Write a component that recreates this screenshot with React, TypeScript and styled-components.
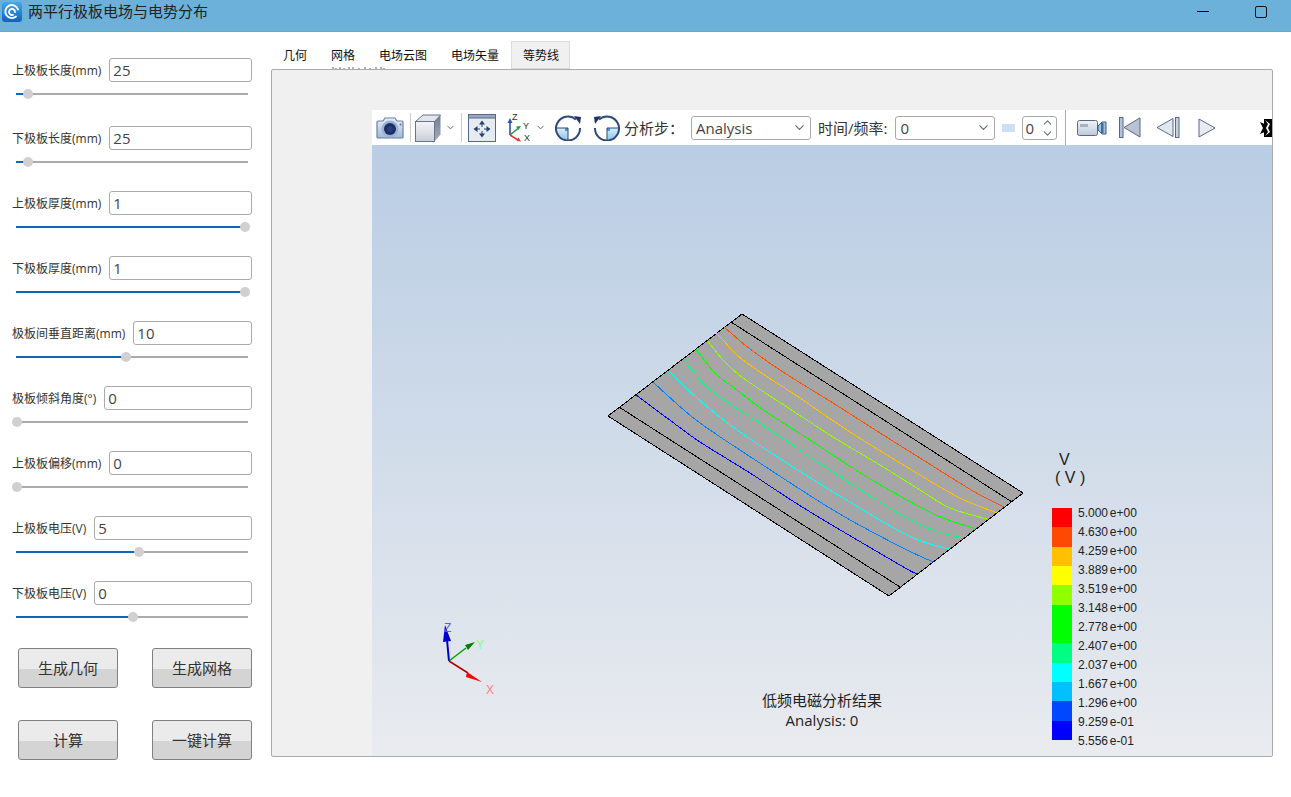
import { createGlobalStyle, styled } from "styled-components";
import { ChevronDown, ChevronUp } from "lucide-react";

const GlobalStyle = createGlobalStyle`
  html, body {
    margin: 0;
    padding: 0;
    background: #fff;
    font-family: "Open Sans", "Noto Sans CJK SC", sans-serif;
  }
`;

const fields = [
  { label: "上极板长度(mm)", value: "25", thumb: 12, after: 68 },
  { label: "下极板长度(mm)", value: "25", thumb: 12, after: 65 },
  { label: "上极板厚度(mm)", value: "1", thumb: 229, after: 65 },
  { label: "下极板厚度(mm)", value: "1", thumb: 229, after: 65 },
  { label: "极板间垂直距离(mm)", value: "10", thumb: 110, after: 65 },
  { label: "极板倾斜角度(°)", value: "0", thumb: 1, after: 65 },
  { label: "上极板偏移(mm)", value: "0", thumb: 1, after: 65 },
  { label: "上极板电压(V)", value: "5", thumb: 123, after: 65 },
  { label: "下极板电压(V)", value: "0", thumb: 117, after: 67 },
];

const tabs = ["几何", "网格", "电场云图", "电场矢量", "等势线"];

const legend = [
  { color: "#ff0000", label: "5.000 e+00" },
  { color: "#ff4800", label: "4.630 e+00" },
  { color: "#ffc000", label: "4.259 e+00" },
  { color: "#ffff00", label: "3.889 e+00" },
  { color: "#90ff00", label: "3.519 e+00" },
  { color: "#00ff00", label: "3.148 e+00" },
  { color: "#00ff00", label: "2.778 e+00" },
  { color: "#00ff80", label: "2.407 e+00" },
  { color: "#00ffff", label: "2.037 e+00" },
  { color: "#00c0ff", label: "1.667 e+00" },
  { color: "#0048ff", label: "1.296 e+00" },
  { color: "#0000ff", label: "9.259 e-01" },
];

// 等势线, page coordinates read off the screenshot
const contours: { color: string; pts: number[][] }[] = [
  { color: "#ff5000", pts: [[724, 327], [739, 340], [750, 349], [783, 372], [833, 403], [880, 433], [920, 458], [973, 491], [1004, 507]] },
  { color: "#ffc000", pts: [[716, 333], [723, 340], [737, 355], [760, 372], [800, 398], [850, 432], [920, 475], [960, 498], [997, 513]] },
  { color: "#90ff00", pts: [[708, 341], [723, 360], [743, 378], [787, 407], [833, 437], [880, 465], [920, 490], [950, 508], [987, 519]] },
  { color: "#00ff00", pts: [[696, 349], [715, 373], [737, 390], [762, 409], [810, 440], [867, 477], [920, 507], [943, 518], [976, 529]] },
  { color: "#00ff80", pts: [[683, 359], [703, 383], [720, 397], [767, 428], [827, 468], [893, 510], [933, 530], [963, 538]] },
  { color: "#00ffff", pts: [[669, 371], [697, 398], [733, 427], [793, 467], [863, 510], [913, 538], [949, 549]] },
  { color: "#0080ff", pts: [[653, 382], [677, 404], [700, 423], [743, 452], [833, 510], [897, 545], [933, 562]] },
  { color: "#0000ff", pts: [[636, 395], [667, 418], [700, 442], [750, 473], [807, 510], [900, 565], [917, 574]] },
];

// catmull-rom through the read-off points so the lines don't kink
function smoothPath(pts: number[][]) {
  let d = `M${pts[0][0]} ${pts[0][1]}`;
  for (let i = 0; i < pts.length - 1; i++) {
    const p0 = pts[Math.max(i - 1, 0)];
    const p1 = pts[i];
    const p2 = pts[i + 1];
    const p3 = pts[Math.min(i + 2, pts.length - 1)];
    const c1x = p1[0] + (p2[0] - p0[0]) / 6;
    const c1y = p1[1] + (p2[1] - p0[1]) / 6;
    const c2x = p2[0] - (p3[0] - p1[0]) / 6;
    const c2y = p2[1] - (p3[1] - p1[1]) / 6;
    d += `C${c1x} ${c1y} ${c2x} ${c2y} ${p2[0]} ${p2[1]}`;
  }
  return d;
}

function App() {
  return (
    <Page>
      <GlobalStyle />
      <TitleBar>
        <Logo viewBox="0 0 20 20">
          <defs>
            <linearGradient id="logoBg" x1="0" y1="0" x2="0" y2="1">
              <stop offset="0" stopColor="#45aaee" />
              <stop offset="1" stopColor="#0f62b8" />
            </linearGradient>
          </defs>
          <rect width="20" height="20" rx="3" fill="url(#logoBg)" />
          <path
            d="M16 7.500A6.500 6.500 0 1 0 14 14.500M13 10a3 3 0 1 0-2 2.800"
            fill="none"
            stroke="#fff"
            strokeWidth="1.800"
            strokeLinecap="round"
          />
        </Logo>
        <AppTitle>两平行极板电场与电势分布</AppTitle>
        <WindowButtons>
          <MinimizeGlyph />
          <MaximizeGlyph />
        </WindowButtons>
      </TitleBar>

      <Body>
        <Sidebar>
          {fields.map((field, i) => (
            <Field key={i} $after={field.after}>
              <FieldRow>
                <FieldLabel>{field.label}</FieldLabel>
                <ValueInput defaultValue={field.value} readOnly />
              </FieldRow>
              <SliderTrack>
                <SliderFill style={{ width: field.thumb }} />
                <SliderThumb style={{ left: field.thumb - 5 }} />
              </SliderTrack>
            </Field>
          ))}
          <ActionGrid>
            <ActionButton>生成几何</ActionButton>
            <ActionButton>生成网格</ActionButton>
            <ActionButton>计算</ActionButton>
            <ActionButton>一键计算</ActionButton>
          </ActionGrid>
        </Sidebar>

        <Main>
          <TabBar>
            {tabs.map((tab) => (
              <Tab key={tab} $active={tab === "等势线"}>
                {tab}
              </Tab>
            ))}
            <TabResidue width="54" height="2" viewBox="0 0 54 2">
              <path d="M1 2V0M4 2V1M8 2V0M12 2V1M17 2V0M21 2V0M27 2V1M33 2V0M38 2V1M44 2V0M49 2V0M52 2V1" stroke="#666" />
            </TabResidue>
          </TabBar>
          <Frame>
            <Viewer>
              <Toolbar>
                <ToolIcon $ml={4} width="28" height="24" viewBox="0 0 28 24">
                  <defs>
                    <linearGradient id="camBody" x1="0" y1="0" x2="0" y2="1">
                      <stop offset="0" stopColor="#e8f0f8" />
                      <stop offset="1" stopColor="#a3b9d6" />
                    </linearGradient>
                  </defs>
                  <path
                    d="M2 5h5l2-3h10l2 3h5a1 1 0 0 1 1 1v15a1 1 0 0 1-1 1H2a1 1 0 0 1-1-1V6a1 1 0 0 1 1-1z"
                    fill="url(#camBody)"
                    stroke="#6a7fa5"
                    strokeWidth="1.200"
                  />
                  <circle cx="14" cy="13" r="8.500" fill="#9bb2d0" />
                  <circle cx="14" cy="13" r="6" fill="#1b2f63" />
                  <circle cx="14" cy="13" r="3" fill="#24407f" />
                  <circle cx="24.500" cy="8.500" r="1" fill="#56698c" />
                </ToolIcon>
                <ToolSeparator $ml={6} />
                <ToolIcon $ml={4} width="26" height="28" viewBox="0 0 26 28">
                  <defs>
                    <linearGradient id="cubeFace" x1="0" y1="0" x2="0" y2="1">
                      <stop offset="0" stopColor="#f4f5f8" />
                      <stop offset="1" stopColor="#c9ced8" />
                    </linearGradient>
                    <linearGradient id="cubeSide" x1="0" y1="0" x2="0" y2="1">
                      <stop offset="0" stopColor="#6f7d95" />
                      <stop offset="1" stopColor="#a3acbb" />
                    </linearGradient>
                  </defs>
                  <path d="M0.500 7.500 8 1h17.500l-6 6.500z" fill="#e2e6ec" stroke="#68758c" />
                  <path d="M19.500 7.500l6-6.500v19.500l-6 7z" fill="url(#cubeSide)" />
                  <rect x="0.500" y="7.500" width="19" height="20" fill="url(#cubeFace)" stroke="#68758c" />
                </ToolIcon>
                <ToolChevron $ml={4} size={11} />
                <ToolSeparator $ml={5} />
                <ToolIcon $ml={6} width="28" height="28" viewBox="0 0 28 28">
                  <rect x="0.500" y="0.500" width="27" height="27" fill="#e6ebf2" stroke="#56698c" />
                  <rect x="0.500" y="0.500" width="27" height="3.500" fill="#9aa8c0" stroke="#56698c" />
                  <path d="M14 6.500l-3 4h6zM14 23.500l-3-4h6zM5.500 15l4-3v6zM22.500 15l-4-3v6z" fill="#25406f" />
                  <path d="M14 10v3M14 17v3M9 15h3M16 15h3" stroke="#25406f" />
                </ToolIcon>
                <ToolIcon $ml={11} width="24" height="30" viewBox="0 0 24 30">
                  <path d="M3 22V8" stroke="#2b55a8" strokeWidth="1.600" />
                  <path d="M3 5 0.500 10h5z" fill="#2b55a8" />
                  <path d="M3 22 11 15.500" stroke="#1f9a4b" strokeWidth="1.600" />
                  <path d="M14 13l-5 .5 2.500 3.500z" fill="#1f9a4b" />
                  <path d="M3 22l8 5" stroke="#e03a3a" strokeWidth="1.600" />
                  <path d="M14 28.500l-4.500-.5 2-3.500z" fill="#e03a3a" />
                  <IconLetter x="5" y="7">Z</IconLetter>
                  <IconLetter x="16" y="16">Y</IconLetter>
                  <IconLetter x="17" y="28">X</IconLetter>
                </ToolIcon>
                <ToolChevron $ml={4} size={11} />
                <RotateIcon $ml={9} id="rotA" />
                <RotateIcon $ml={11} id="rotB" $flip />
                <ToolLabel $ml={4}>分析步：</ToolLabel>
                <ComboBox $ml={7} $w={120}>
                  <span>Analysis</span>
                  <ChevronDown size={15} color="#68737f" />
                </ComboBox>
                <ToolLabel $ml={7}>时间/频率:</ToolLabel>
                <ComboBox $ml={8} $w={100}>
                  <span>0</span>
                  <ChevronDown size={15} color="#68737f" />
                </ComboBox>
                <ProgressChip />
                <SpinBox>
                  <span>0</span>
                  <SpinArrows>
                    <ChevronUp size={13} color="#68737f" />
                    <ChevronDown size={13} color="#68737f" />
                  </SpinArrows>
                </SpinBox>
                <ToolSeparator $ml={8} $strong />
                <ToolIcon $ml={11} width="30" height="18" viewBox="0 0 30 18">
                  <defs>
                    <linearGradient id="videoBody" x1="0" y1="0" x2="0" y2="1">
                      <stop offset="0" stopColor="#f1f4f8" />
                      <stop offset="1" stopColor="#bcc9db" />
                    </linearGradient>
                  </defs>
                  <rect x="0.500" y="1.500" width="20" height="15" rx="2" fill="url(#videoBody)" stroke="#56698c" />
                  <rect x="3" y="5" width="8" height="3" fill="#a9b1bd" />
                  <path d="M21 7l4-4h4v12h-4l-4-4z" fill="#9fc2e0" stroke="#3d5a88" />
                  <rect x="24" y="4" width="2.500" height="10" fill="#3d6fa3" />
                </ToolIcon>
                <ToolIcon $ml={12} width="22" height="21" viewBox="0 0 22 21">
                  <rect x="0.500" y="0.500" width="3.500" height="20" fill="#b5c2d4" stroke="#56698c" />
                  <path d="M21 0.800V20L5 10.500z" fill="#b8c3d2" stroke="#56698c" />
                </ToolIcon>
                <ToolIcon $ml={15} width="24" height="21" viewBox="0 0 24 21">
                  <path d="M17 1.500V19.500L1 10.500z" fill="#e3e8ef" stroke="#56698c" />
                  <rect x="19.500" y="0.500" width="3.500" height="20" fill="#c7d1df" stroke="#56698c" />
                </ToolIcon>
                <ToolIcon $ml={18} width="18" height="20" viewBox="0 0 18 20">
                  <path d="M1 1V19L17 10z" fill="#e7ebf1" stroke="#56698c" />
                </ToolIcon>
                <ToolIcon $ml={44} width="12" height="18" viewBox="0 0 12 18">
                  <rect x="4" width="8" height="18" fill="#000" />
                  <path d="M0 3 7 6 4 9 7 12 0 15 3 9z" fill="#000" />
                  <path d="M5 1 10 5 8 9 10 13 5 17 8 13 6 9 8 5z" fill="#fff" />
                </ToolIcon>
              </Toolbar>
              <Viewport>
                <SceneSvg viewBox="372 145 900 611">
                  <path d="M742 314 1023 493 889 596 608 416z" fill="#a6a6a6" stroke="#000" shapeRendering="crispEdges" />
                  <path d="M731 322 1012 502M619 407 900 587" fill="none" stroke="#000" shapeRendering="crispEdges" />
                  {contours.map((line) => (
                    <path key={line.color} d={smoothPath(line.pts)} fill="none" stroke={line.color} shapeRendering="crispEdges" />
                  ))}
                  <path d="M449 661 447 640" stroke="#0000d0" strokeWidth="2" />
                  <path d="M445 625 443 642 451 641z" fill="#0000d0" />
                  <path d="M449 661 466 648" stroke="#00a000" strokeWidth="1.500" />
                  <path d="M475 642 465 645 468 650z" fill="#008000" />
                  <path d="M449 661 468 673" stroke="#b00000" strokeWidth="1.500" />
                  <path d="M482 682 467 672 466 677z" fill="#ff0000" />
                  <AxisLetter x="444" y="632" fill="#5a5aff">Z</AxisLetter>
                  <AxisLetter x="476" y="649" fill="#80ff80">Y</AxisLetter>
                  <AxisLetter x="486" y="694" fill="#ff8080">X</AxisLetter>
                </SceneSvg>
                <Caption>
                  <div>低频电磁分析结果</div>
                  <div>Analysis: 0</div>
                </Caption>
                <Legend>
                  <LegendTitle>V</LegendTitle>
                  <LegendUnit>( V )</LegendUnit>
                  <LegendBody>
                    <ColorBar>
                      {legend.map((item, i) => (
                        <ColorCell key={i} $color={item.color} />
                      ))}
                    </ColorBar>
                    <LegendValues>
                      {legend.map((item) => (
                        <LegendValue key={item.label}>{item.label}</LegendValue>
                      ))}
                      <LegendValue>5.556 e-01</LegendValue>
                    </LegendValues>
                  </LegendBody>
                </Legend>
              </Viewport>
            </Viewer>
          </Frame>
        </Main>
      </Body>
    </Page>
  );
}
export default App;

function RotateIcon({ $ml, $flip, id }: { $ml: number; $flip?: boolean; id: string }) {
  return (
    <RotateSvg $ml={$ml} $flip={$flip} width="27" height="27" viewBox="0 0 27 27">
      <defs>
        <linearGradient id={id} x1="0" y1="0" x2="0" y2="1">
          <stop offset="0" stopColor="#d9eefb" />
          <stop offset="1" stopColor="#8cc4ea" />
        </linearGradient>
      </defs>
      <path d="M13 14H1A12 12 0 0 0 13 26z" fill={`url(#${id})`} />
      <path d="M10 14h3v3h-3z" fill="#4f9bd8" />
      <path d="M1 14h12v12" fill="none" stroke="#2f4a78" />
      <path d="M21 5.500A12 12 0 1 0 25 14" fill="none" stroke="#2f4a78" strokeWidth="2" />
      <path d="M19 2l7 1-1 7z" fill="#1d3566" />
    </RotateSvg>
  );
}

const Page = styled.div`
  width: 1291px;
  height: 797px;
  overflow: hidden;
  background: #fff;
`;

const TitleBar = styled.div`
  height: 31px;
  display: flex;
  align-items: flex-start;
  padding-left: 2px;
  background: #6bb1da;
  border-bottom: 1px solid #9a9a9a;
`;

const Logo = styled.svg`
  width: 20px;
  height: 20px;
  margin-top: 2px;
`;

const AppTitle = styled.div`
  margin-left: 6px;
  font-size: 15px;
  line-height: 22px;
  color: #222;
`;

const WindowButtons = styled.div`
  margin-left: auto;
  display: flex;
  align-items: flex-start;
`;

const MinimizeGlyph = styled.div`
  width: 12px;
  height: 1px;
  margin-top: 11px;
  background: #000;
`;

const MaximizeGlyph = styled.div`
  box-sizing: border-box;
  width: 12px;
  height: 12px;
  margin: 6px 24px 0 46px;
  border: 1.5px solid #111;
  border-radius: 2px;
`;

const Body = styled.div`
  display: flex;
`;

const Sidebar = styled.div`
  width: 271px;
  box-sizing: border-box;
  padding: 26px 19px 0 12px;
`;

const Field = styled.div<{ $after: number }>`
  height: ${(p) => p.$after}px;
`;

const FieldRow = styled.div`
  display: flex;
  align-items: center;
  gap: 8px;
  height: 24px;
`;

const FieldLabel = styled.label`
  font-size: 12px;
  color: #333;
  white-space: nowrap;
`;

const ValueInput = styled.input`
  flex: 1;
  min-width: 0;
  height: 24px;
  box-sizing: border-box;
  padding: 0 3px;
  border: 1px solid #aaa;
  border-radius: 3px;
  outline: none;
  font-family: inherit;
  font-size: 15px;
  color: #444;
`;

const SliderTrack = styled.div`
  position: relative;
  width: 232px;
  height: 2px;
  margin: 11px 0 0 4px;
  background: #ababab;
`;

const SliderFill = styled.div`
  height: 2px;
  background: #0f66b5;
`;

const SliderThumb = styled.div`
  position: absolute;
  top: -4px;
  width: 10px;
  height: 10px;
  border-radius: 50%;
  background: #d0d0d0;
`;

const ActionGrid = styled.div`
  display: grid;
  grid-template-columns: 100px 100px;
  grid-auto-rows: 40px;
  column-gap: 34px;
  row-gap: 32px;
  margin-left: 6px;
`;

const ActionButton = styled.button`
  padding: 0 0 2px;
  border: 1px solid #808080;
  border-radius: 3px;
  background: linear-gradient(#ebebeb 0, #ebebeb 52%, #d4d4d4 52%, #d4d4d4 100%);
  font-family: inherit;
  font-size: 15px;
  color: #333;
`;

const Main = styled.div`
  width: 1002px;
  padding-top: 9px;
`;

const TabBar = styled.div`
  position: relative;
  display: flex;
  height: 28px;
`;

const TabResidue = styled.svg`
  position: absolute;
  left: 61px;
  bottom: 0;
`;

const Tab = styled.div<{ $active?: boolean }>`
  box-sizing: border-box;
  height: 28px;
  padding: 6px ${(p) => (p.$active ? 11 : 12)}px 0 12px;
  font-size: 12px;
  line-height: 17px;
  color: #111;
  white-space: nowrap;
  background: ${(p) => (p.$active ? "#f0f0f0" : "transparent")};
  box-shadow: ${(p) => (p.$active ? "inset 0 0 0 1px #dcdcdc" : "none")};
`;

const Frame = styled.div`
  box-sizing: border-box;
  width: 1002px;
  height: 688px;
  padding: 40px 0 0 100px;
  border: 1px solid #aaa;
  border-radius: 2px;
  background: #f0f0f0;
  overflow: hidden;
`;

const Viewer = styled.div`
  display: flex;
  flex-direction: column;
  height: 100%;
`;

const Toolbar = styled.div`
  display: flex;
  align-items: center;
  height: 35px;
  background: #fff;
  overflow: hidden;
  flex: none;
`;

const ToolIcon = styled.svg<{ $ml: number }>`
  flex: none;
  margin-left: ${(p) => p.$ml}px;
`;

const RotateSvg = styled.svg<{ $ml: number; $flip?: boolean }>`
  flex: none;
  margin-left: ${(p) => p.$ml}px;
  transform: ${(p) => (p.$flip ? "scaleX(-1)" : "none")};
`;

const IconLetter = styled.text`
  font-family: "Liberation Sans", sans-serif;
  font-size: 9px;
  fill: #333;
`;

const ToolChevron = styled(ChevronDown)<{ $ml: number }>`
  flex: none;
  margin-left: ${(p) => p.$ml}px;
  color: #56606e;
`;

const ToolSeparator = styled.div<{ $ml: number; $strong?: boolean }>`
  flex: none;
  width: 1px;
  height: ${(p) => (p.$strong ? 35 : 29)}px;
  margin-left: ${(p) => p.$ml}px;
  background: ${(p) => (p.$strong ? "#aaa" : "#ccc")};
`;

const ToolLabel = styled.div<{ $ml: number }>`
  flex: none;
  margin-left: ${(p) => p.$ml}px;
  font-size: 15px;
  color: #333;
  white-space: nowrap;
`;

const ComboBox = styled.div<{ $ml: number; $w: number }>`
  flex: none;
  box-sizing: border-box;
  display: flex;
  align-items: center;
  justify-content: space-between;
  width: ${(p) => p.$w}px;
  height: 24px;
  margin-left: ${(p) => p.$ml}px;
  padding: 0 3px 0 4px;
  border: 1px solid #aaa;
  border-radius: 3px;
  font-size: 15px;
  color: #444;
`;

const ProgressChip = styled.div`
  flex: none;
  width: 12px;
  height: 8px;
  margin-left: 7px;
  background: #c9e0f8;
  border-right: 1px solid #ddd;
`;

const SpinBox = styled.div`
  flex: none;
  box-sizing: border-box;
  display: flex;
  align-items: center;
  justify-content: space-between;
  width: 35px;
  height: 24px;
  margin-left: 7px;
  padding: 0 2px;
  border: 1px solid #aaa;
  border-radius: 3px;
  font-size: 15px;
  color: #444;
`;

const SpinArrows = styled.div`
  display: flex;
  flex-direction: column;
  height: 22px;
  justify-content: space-between;
  & svg {
    display: block;
    margin: -1px 0;
  }
`;

const Viewport = styled.div`
  position: relative;
  flex: 1;
  background: linear-gradient(#b9cde4, #e9ebef);
`;

const SceneSvg = styled.svg`
  position: absolute;
  inset: 0;
  width: 900px;
  height: 611px;
`;

const AxisLetter = styled.text`
  font-family: "Liberation Sans", sans-serif;
  font-size: 12px;
`;

const Caption = styled.div`
  position: absolute;
  left: 340px;
  top: 545px;
  width: 220px;
  text-align: center;
  font-size: 15px;
  line-height: 20px;
  color: #222;
`;

const Legend = styled.div`
  position: absolute;
  left: 680px;
  top: 306px;
  color: #222;
`;

const LegendTitle = styled.div`
  margin-left: 7px;
  font-family: "Liberation Sans", sans-serif;
  font-size: 16px;
  line-height: 18px;
`;

const LegendUnit = styled.div`
  margin-left: 3px;
  font-family: "Liberation Sans", sans-serif;
  font-size: 16px;
  line-height: 18px;
  white-space: pre;
`;

const LegendBody = styled.div`
  display: flex;
  margin-top: 21px;
  height: 232px;
`;

const ColorBar = styled.div`
  display: flex;
  flex-direction: column;
  width: 20px;
  height: 232px;
`;

const ColorCell = styled.div<{ $color: string }>`
  flex: 1;
  background: ${(p) => p.$color};
`;

const LegendValues = styled.div`
  display: flex;
  flex-direction: column;
  margin: -4px 0 0 6px;
`;

const LegendValue = styled.div`
  height: 19px;
  font-family: "Liberation Sans", sans-serif;
  font-size: 12px;
  line-height: 19px;
  word-spacing: -1.5px;
  white-space: nowrap;
`;
